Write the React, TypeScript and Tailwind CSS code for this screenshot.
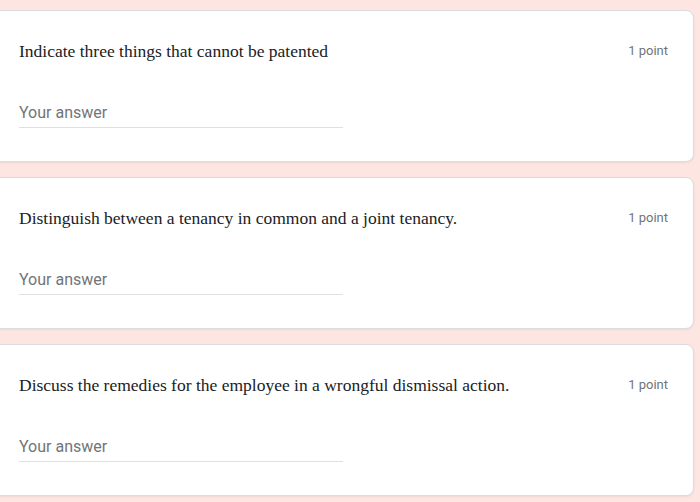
import React from 'react';

interface Question {
  id: number;
  title: string;
  points: number;
}

const questions: Question[] = [
  { id: 1, title: 'Indicate three things that cannot be patented', points: 1 },
  { id: 2, title: 'Distinguish between a tenancy in common and a joint tenancy.', points: 1 },
  { id: 3, title: 'Discuss the remedies for the employee in a wrongful dismissal action.', points: 1 },
];

function QuestionCard({ q }: { q: Question }) {
  return (
    <div className="-ml-2 h-[152px] rounded-lg border border-[#dadce0] bg-white pl-[26px] pr-[25px] pt-[28px] shadow-[0_1px_2px_rgba(60,64,67,0.08)]">
      <div className="flex items-start justify-between">
        <div
          className="text-[17.5px] leading-6 text-[#202124]"
          style={{ fontFamily: '"Liberation Serif", serif' }}
        >
          {q.title}
        </div>
        <div className="pt-[2px] text-[13px] leading-5 text-[#70757a] [font-family:Roboto,sans-serif]">
          {q.points} point
        </div>
      </div>
      <div className="mt-[38px] w-[324px] border-b border-[#e0e0e0] pb-[2px] text-[16px] leading-6 text-[#70757a] [font-family:Roboto,sans-serif]">
        Your answer
      </div>
    </div>
  );
}

export default function App() {
  return (
    <div className="h-[502px] w-[700px] overflow-hidden bg-[#fde6e1] pr-[6px] pt-[10px]">
      <div className="flex flex-col gap-[15px]">
        {questions.map((q) => (
          <QuestionCard key={q.id} q={q} />
        ))}
      </div>
    </div>
  );
}
